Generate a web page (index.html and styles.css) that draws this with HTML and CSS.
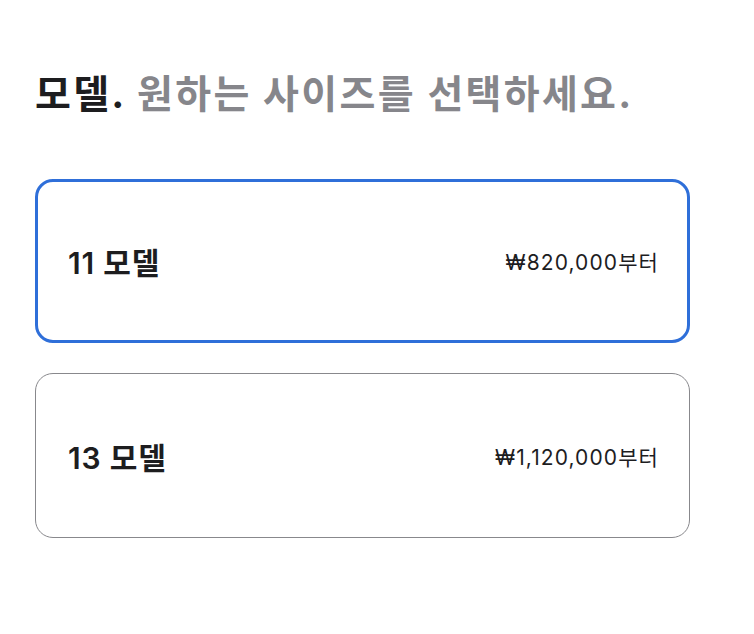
FILE: index.html
```html
<!DOCTYPE html>
<html lang="ko">
<head>
<meta charset="utf-8">
<link rel="stylesheet" href="styles.css">
</head>
<body>
<main class="page">
  <h2 class="heading"><span class="heading-strong">모델.</span> <span class="heading-muted">원하는 사이즈를 선택하세요.</span></h2>
  <div class="options">
    <div class="option option-selected">
      <span class="option-title">11 모델</span>
      <span class="option-price">₩820,000부터</span>
    </div>
    <div class="option">
      <span class="option-title">13 모델</span>
      <span class="option-price">₩1,120,000부터</span>
    </div>
  </div>
</main>
</body>
</html>
```
FILE: styles.css
```css
html, body {
  margin: 0;
  padding: 0;
  background: #ffffff;
}
body {
  font-family: "Inter", "Noto Sans CJK KR", sans-serif;
  color: #1d1d1f;
}
.page {
  padding: 68px 0 0 35px;
  width: 655px;
}
.heading {
  margin: 0;
  font-size: 39px;
  line-height: 52px;
  font-weight: 700;
  letter-spacing: 2.3px;
  white-space: nowrap;
}
.heading-strong {
  color: #1d1d1f;
}
.heading-muted {
  color: #86868b;
}
.options {
  margin-top: 59px;
  display: flex;
  flex-direction: column;
  gap: 30px;
}
.option {
  box-sizing: border-box;
  height: 165px;
  border: 1px solid #88888c;
  border-radius: 18px;
  display: flex;
  align-items: center;
  justify-content: space-between;
  padding: 0 30px 0 32px;
}
.option-selected {
  height: 164px;
  border: 3px solid #2f6fd9;
  padding: 0 28px 0 30px;
}
.option-title {
  font-size: 30px;
  font-weight: 600;
  letter-spacing: 0.8px;
}
.option-price {
  font-size: 21px;
  font-weight: 400;
  letter-spacing: 1.1px;
}
```
